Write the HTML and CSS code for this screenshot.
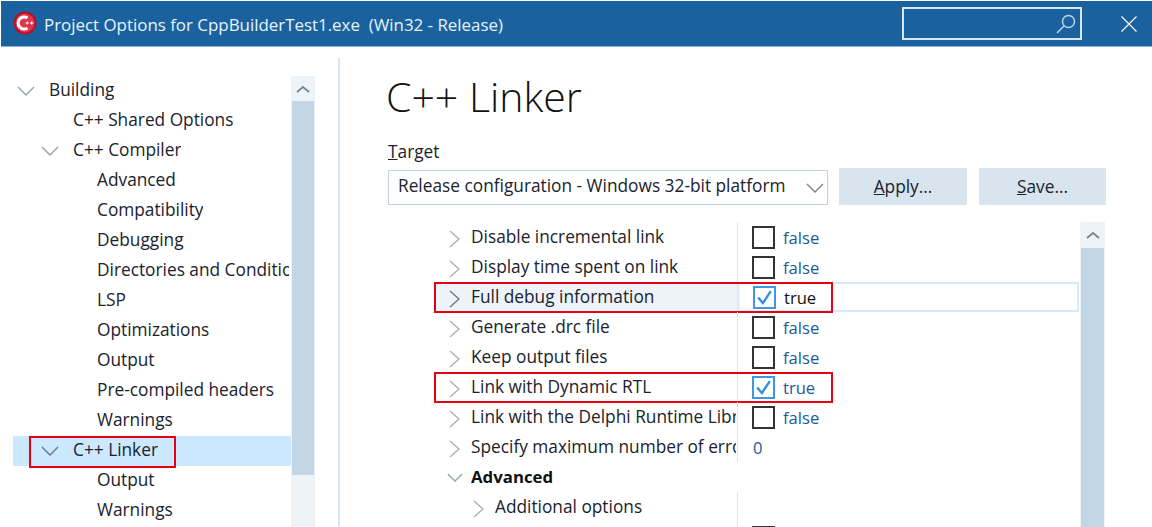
FILE: index.html
```html
<!DOCTYPE html>
<html lang="en">
<head>
<meta charset="utf-8">
<title>Project Options</title>
<link rel="stylesheet" href="styles.css">
</head>
<body>
<svg class="defs" width="0" height="0" aria-hidden="true">
  <symbol id="down" viewBox="0 0 18 10"><path d="M1 1l8 8 8-8" fill="none" stroke="currentColor" stroke-width="1.4"/></symbol>
  <symbol id="right" viewBox="0 0 11 18"><path d="M1 1l9 8-9 8" fill="none" stroke="currentColor" stroke-width="1.4"/></symbol>
  <symbol id="up" viewBox="0 0 14 8"><path d="M1 7l6-5 6 5" fill="none" stroke="currentColor" stroke-width="1.8"/></symbol>
  <symbol id="check" viewBox="0 0 24 24"><path d="M4 12l6 7L20 4" fill="none" stroke="#2f8fe0" stroke-width="3"/></symbol>
</svg>
<header class="titlebar">
  <svg class="logo" viewBox="0 0 24 24" width="24" height="24">
    <circle cx="12" cy="12" r="11.5" fill="#b80f2a"/>
    <circle cx="12" cy="12" r="9.5" fill="#e0344a"/>
    <path d="M14.5 7A6 6 0 1 0 14.5 17" fill="none" stroke="#fff" stroke-width="3.2"/>
    <path d="M12.5 12h3.4M14.2 10.4v3.2M17 12h3.4M18.7 10.4v3.2" stroke="#fff" stroke-width="1.2"/>
  </svg>
  <span class="title">Project Options for CppBuilderTest1.exe&nbsp; (Win32 - Release)</span>
  <div class="search">
    <svg viewBox="0 0 22 22" width="22" height="22"><circle cx="13.5" cy="8.5" r="6" fill="none" stroke="#b9d3e8" stroke-width="1.5"/><path d="M9.2 12.8L2 20" stroke="#b9d3e8" stroke-width="1.5"/></svg>
  </div>
  <svg class="close" viewBox="0 0 16 16" width="16" height="16"><path d="M.5.5l15 15M15.5.5l-15 15" stroke="#fff" stroke-width="1.2"/></svg>
</header>
<main class="main">
  <aside class="side">
    <div class="tree">
      <div class="node"><svg class="tw"><use href="#down"/></svg><span>Building</span></div>
      <div class="node l1"><span class="tw-gap"></span><span>C++ Shared Options</span></div>
      <div class="node l1"><svg class="tw"><use href="#down"/></svg><span>C++ Compiler</span></div>
      <div class="node l2"><span class="tw-gap"></span><span>Advanced</span></div>
      <div class="node l2"><span class="tw-gap"></span><span>Compatibility</span></div>
      <div class="node l2"><span class="tw-gap"></span><span>Debugging</span></div>
      <div class="node l2"><span class="tw-gap"></span><span>Directories and Conditionals</span></div>
      <div class="node l2"><span class="tw-gap"></span><span>LSP</span></div>
      <div class="node l2"><span class="tw-gap"></span><span>Optimizations</span></div>
      <div class="node l2"><span class="tw-gap"></span><span>Output</span></div>
      <div class="node l2"><span class="tw-gap"></span><span>Pre-compiled headers</span></div>
      <div class="node l2"><span class="tw-gap"></span><span>Warnings</span></div>
      <div class="node l1 selected"><svg class="tw"><use href="#down"/></svg><span>C++ Linker</span><i class="mark mark-tree"></i></div>
      <div class="node l2"><span class="tw-gap"></span><span>Output</span></div>
      <div class="node l2"><span class="tw-gap"></span><span>Warnings</span></div>
    </div>
    <div class="scroll scroll-tree">
      <div class="scroll-btn"><svg><use href="#up"/></svg></div>
      <div class="thumb"></div>
    </div>
  </aside>
  <section class="content">
    <h1 class="heading">C++ Linker</h1>
    <label class="target-label"><u>T</u>arget</label>
    <div class="target-row">
      <div class="combo"><span>Release configuration - Windows 32-bit platform</span><svg><use href="#down"/></svg></div>
      <button class="btn apply"><u>A</u>pply...</button>
      <button class="btn save"><u>S</u>ave...</button>
    </div>
    <div class="grid-wrap">
      <div class="grid">
        <div class="row"><div class="name"><svg class="ex"><use href="#right"/></svg><span>Disable incremental link</span></div><div class="val"><i class="cb"></i><span class="v">false</span></div></div>
        <div class="row"><div class="name"><svg class="ex"><use href="#right"/></svg><span>Display time spent on link</span></div><div class="val"><i class="cb"></i><span class="v">false</span></div></div>
        <div class="row hot"><div class="name"><svg class="ex"><use href="#right"/></svg><span>Full debug information</span></div><div class="val"><i class="cb on"><svg><use href="#check"/></svg></i><span class="v black">true</span></div><i class="mark mark-row"></i></div>
        <div class="row"><div class="name"><svg class="ex"><use href="#right"/></svg><span>Generate .drc file</span></div><div class="val"><i class="cb"></i><span class="v">false</span></div></div>
        <div class="row"><div class="name"><svg class="ex"><use href="#right"/></svg><span>Keep output files</span></div><div class="val"><i class="cb"></i><span class="v">false</span></div></div>
        <div class="row"><div class="name"><svg class="ex"><use href="#right"/></svg><span>Link with Dynamic RTL</span></div><div class="val"><i class="cb on"><svg><use href="#check"/></svg></i><span class="v">true</span></div><i class="mark mark-row"></i></div>
        <div class="row"><div class="name"><svg class="ex"><use href="#right"/></svg><span>Link with the Delphi Runtime Library</span></div><div class="val"><i class="cb"></i><span class="v">false</span></div></div>
        <div class="row"><div class="name"><svg class="ex"><use href="#right"/></svg><span>Specify maximum number of errors</span></div><div class="val"><span class="v num">0</span></div></div>
        <div class="row group"><div class="name"><svg class="ex-down"><use href="#down"/></svg><strong>Advanced</strong></div></div>
        <div class="row"><div class="name sub"><svg class="ex"><use href="#right"/></svg><span>Additional options</span></div><div class="val"></div></div>
        <div class="row"><div class="name"></div><div class="val"><i class="cb"></i></div></div>
      </div>
      <div class="scroll scroll-grid">
        <div class="scroll-btn"><svg><use href="#up"/></svg></div>
        <div class="thumb"></div>
      </div>
    </div>
  </section>
</main>
</body>
</html>
```
FILE: styles.css
```css
* { box-sizing: border-box; }
html, body { margin: 0; padding: 0; height: 527px; overflow: hidden; background: #fff; }
body { font-family: "Open Sans", "Noto Sans", sans-serif; font-size: 17.3px; color: #1a222c; }
.defs { position: absolute; }
i { display: block; font-style: normal; }

.titlebar { height: 46px; margin-left: 1px; margin-top: 1px; padding: 0 15px 0 12px; background: #19629f; border-bottom: 1px solid #8db3d3; display: flex; align-items: center; color: #fff; }
.logo { flex: none; margin-top: -1px; }
.title { margin-left: 7px; margin-top: 2px; font-size: 16.9px; color: #eaf2f8; flex: 1; white-space: nowrap; }
.search { width: 180px; height: 33px; border: 2px solid #d8e6f1; display: flex; align-items: center; justify-content: flex-end; padding-right: 3px; }
.close { margin-left: 39px; }

.main { display: flex; height: 480px; margin-top: 1px; }
.side { width: 340px; flex: none; margin-top: 10px; padding: 18px 24px 0 13px; border-right: 2px solid #dbe5ee; display: flex; }
.tree { width: 278px; flex: none; overflow: hidden; }
.node { height: 30px; display: flex; align-items: center; white-space: nowrap; padding-right: 2px; }
.node > span:last-of-type { padding-bottom: 3px; overflow: hidden; }
.node .tw-gap { padding-bottom: 0; }
.node.l1 { padding-left: 24px; }
.node.l2 { padding-left: 48px; }
.node.selected { background: #cce8ff; position: relative; }
.tw { width: 18px; height: 10px; margin-left: 4px; margin-right: 14px; flex: none; color: #96a0a8; }
.tw-gap { width: 36px; flex: none; }
.selected .tw { color: #6b7680; }

.mark { position: absolute; border: 2px solid #e60012; pointer-events: none; }
.mark-tree { left: 16px; top: 0; width: 147px; height: 32px; }
.mark-row { left: 0; top: 0; width: 399px; height: 31px; }

.scroll { background: #eef3f8; display: flex; flex-direction: column; align-items: stretch; flex: none; }
.scroll-btn { display: flex; align-items: center; justify-content: center; color: #7c858e; }
.scroll-btn svg { width: 14px; height: 8px; }
.thumb { background: #c3d6e6; margin: 0 1px; }
.scroll-tree { width: 24px; height: 452px; }
.scroll-tree .scroll-btn { height: 25px; }
.scroll-tree .thumb { height: 374px; }
.scroll-grid { width: 25px; margin-left: 1px; height: 310px; }
.scroll-grid .scroll-btn { height: 26px; }
.scroll-grid .thumb { flex: 1; }

.content { flex: 1; padding: 0 0 0 47px; min-width: 0; }
.heading { margin: 0 0 0 -1px; height: 100px; padding-top: 23px; font-size: 41px; line-height: 50px; font-weight: 300; color: #111; }
.target-label { display: block; height: 22px; margin-left: 1px; margin-top: -7px; line-height: 22px; }
.target-row { display: flex; align-items: flex-start; margin-top: 5px; margin-left: 1px; }
.combo { width: 440px; height: 35px; border: 1px solid #c3d0db; display: flex; align-items: center; justify-content: space-between; padding: 0 1px 0 9px; margin-top: 2px; white-space: nowrap; }
.combo span { padding-bottom: 5px; }
.combo svg { width: 18px; height: 10px; color: #7c858e; margin-right: 2px; }
.btn { height: 37px; border: 0; background: #d8e4ee; font: inherit; color: #1a222c; padding: 0; }
.apply { width: 128px; margin-left: 11px; }
.save { width: 127px; margin-left: 12px; }

.grid-wrap { display: flex; margin-top: 17px; margin-left: 47px; }
.grid { width: 645px; flex: none; }
.row { height: 30px; display: flex; position: relative; }
.name { width: 304px; flex: none; display: flex; align-items: center; padding-left: 15px; overflow: hidden; white-space: nowrap; border-right: 1px solid #dbe5ee; padding-right: 1px; }
.name > span, .name > strong { margin-bottom: 1px; overflow: hidden; }
.name.sub { padding-left: 39px; }
.ex { width: 11px; height: 18px; margin-right: 11px; margin-top: 3px; flex: none; color: #a8b0b7; }
.hot .ex { color: #6b7680; }
.ex-down { width: 16px; height: 9px; margin-left: -2px; margin-right: 8px; margin-top: 1px; flex: none; color: #96a0a8; }
.group .name { border-right: 0; }
.group strong { font-weight: 700; font-size: 16.8px; color: #111; }
.val { flex: 1; display: flex; align-items: center; padding-left: 14px; }
.cb { width: 23px; height: 23px; border: 2px solid #333; flex: none; margin-top: 1px; }
.cb.on { border-color: #3c97e4; }
.cb svg { display: block; width: 19px; height: 19px; }
.v { margin-left: 8px; font-size: 16.6px; color: #1a5a96; margin-top: 1px; }
.v.black { color: #111; }
.v.num { margin-left: 1px; }
.hot .name { background: #eef3fa; }
.hot .val { border: 2px solid #d4ebff; border-left-color: #e4f2ff; padding-left: 13px; height: 30px; }
```
